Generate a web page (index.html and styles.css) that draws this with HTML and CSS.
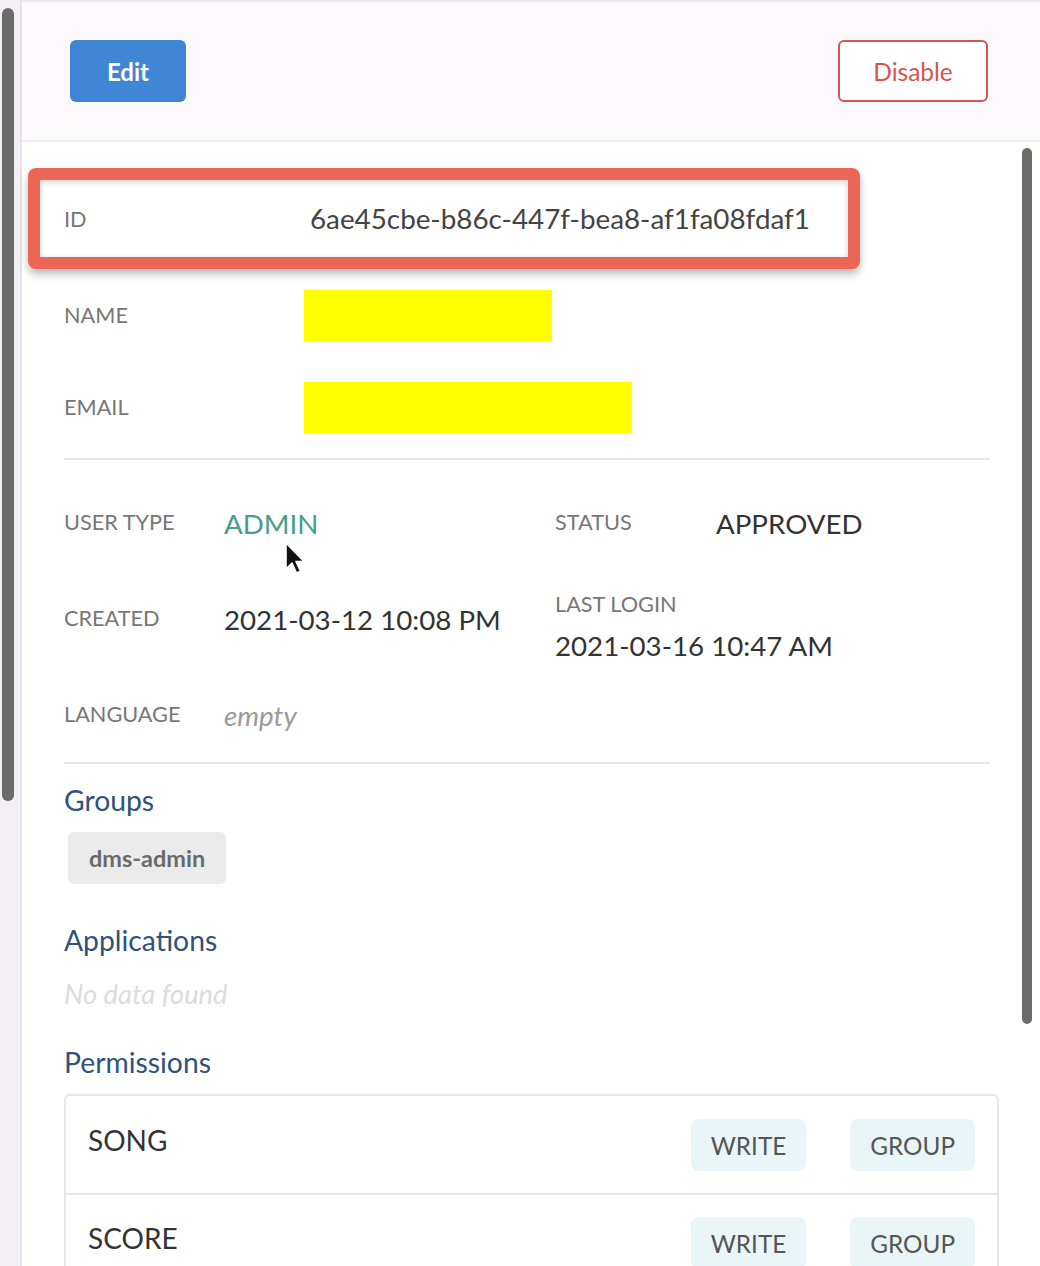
FILE: index.html
```html
<!DOCTYPE html>
<html>
<head>
<meta charset="utf-8">
<link rel="stylesheet" href="styles.css">
</head>
<body>
<div class="app">
  <div class="side-strip"><div class="side-thumb"></div></div>
  <div class="panel">
    <header class="panel-header">
      <button class="btn btn-edit">Edit</button>
      <button class="btn btn-disable">Disable</button>
    </header>
    <div class="panel-body">
      <div class="content">
        <div class="row id-row">
          <div class="label">ID</div>
          <div class="value id-value">6ae45cbe-b86c-447f-bea8-af1fa08fdaf1</div>
        </div>
        <div class="row name-row">
          <div class="label">NAME</div>
          <div class="redact redact-name"></div>
        </div>
        <div class="row email-row">
          <div class="label">EMAIL</div>
          <div class="redact redact-email"></div>
        </div>
        <div class="divider"></div>
        <div class="details">
          <div class="detail-col">
            <div class="drow">
              <div class="dlabel">USER TYPE</div>
              <div class="dvalue admin">ADMIN</div>
            </div>
            <div class="drow">
              <div class="dlabel">CREATED</div>
              <div class="dvalue">2021-03-12 10:08 PM</div>
            </div>
            <div class="drow">
              <div class="dlabel">LANGUAGE</div>
              <div class="dvalue empty">empty</div>
            </div>
          </div>
          <div class="detail-col right-col">
            <div class="drow">
              <div class="dlabel">STATUS</div>
              <div class="dvalue">APPROVED</div>
            </div>
            <div class="stacked">
              <div class="dlabel">LAST LOGIN</div>
              <div class="dvalue">2021-03-16 10:47 AM</div>
            </div>
          </div>
          <svg class="cursor" width="24" height="36" viewBox="0 0 24 36">
            <path d="M2 1 L2 27 L8 21 L12.5 31 L16.5 29.2 L12 19.5 L20 19.5 Z" fill="#111" stroke="#fff" stroke-width="1.6" stroke-linejoin="round"/>
          </svg>
        </div>
        <div class="divider divider-2"></div>
        <h2 class="section-title groups-title">Groups</h2>
        <div class="chips"><span class="chip">dms-admin</span></div>
        <h2 class="section-title apps-title">Applications</h2>
        <div class="no-data">No data found</div>
        <h2 class="section-title perms-title">Permissions</h2>
        <div class="perm-table">
          <div class="perm-row">
            <div class="perm-name">SONG</div>
            <div class="perm-tags"><span class="tag">WRITE</span><span class="tag">GROUP</span></div>
          </div>
          <div class="perm-row">
            <div class="perm-name">SCORE</div>
            <div class="perm-tags"><span class="tag">WRITE</span><span class="tag">GROUP</span></div>
          </div>
        </div>
      </div>
      <div class="vscroll"><div class="vthumb"></div></div>
    </div>
  </div>
</div>
</body>
</html>
```

FILE: styles.css
```css
* { box-sizing: border-box; }
html, body { margin: 0; padding: 0; }
body {
  font-family: Lato, "Noto Sans", "Liberation Sans", sans-serif;
  background: #ffffff;
  color: #333;
  width: 1040px;
  height: 1266px;
  overflow: hidden;
}
.app {
  display: flex;
  height: 1266px;
}
.side-strip {
  flex: none;
  width: 22px;
  background: #f3eff5;
  border-right: 2px solid #e6e2ea;
  padding: 8px 0 0 2px;
}
.side-thumb {
  width: 12px;
  height: 793px;
  background: #6a6a6a;
  border-radius: 6px;
}
.panel {
  flex: 1;
  display: flex;
  flex-direction: column;
  min-width: 0;
}
.panel-header {
  height: 142px;
  flex: none;
  background: #fbf9fc;
  border-top: 2px solid #ebebeb;
  border-bottom: 2px solid #eeeeee;
  display: flex;
  justify-content: space-between;
  align-items: flex-start;
  padding: 38px 52px 0 48px;
}
.btn {
  font-family: Lato, "Noto Sans", sans-serif;
  border-radius: 6px;
  height: 62px;
  cursor: pointer;
  padding: 0;
}
.btn-edit {
  width: 116px;
  background: #3f87d4;
  color: #fff;
  border: none;
  font-size: 24px;
  font-weight: 700;
}
.btn-disable {
  width: 150px;
  background: #fff;
  color: #d9534f;
  border: 2px solid #d9534f;
  font-weight: 400;
  font-size: 24.5px;
}
.panel-body {
  flex: 1;
  display: flex;
  min-height: 0;
}
.content {
  flex: 1;
  padding: 26px 0 0 42px;
  position: relative;
  min-width: 0;
}
.vscroll {
  width: 20px;
  flex: none;
  padding: 6px 0 0 2px;
}
.vthumb {
  width: 10px;
  height: 876px;
  background: #6b6d6b;
  border-radius: 5px;
}
.row {
  display: flex;
  align-items: center;
}
.label {
  width: 240px;
  flex: none;
  font-size: 21.7px;
  color: #777;
}
.value {
  font-size: 27.8px;
  color: #444;
}
.id-row {
  margin-left: -36px;
  width: 832px;
  height: 101px;
  border: 12px solid #ec6656;
  border-radius: 8px;
  padding-left: 24px;
  box-shadow: 0 5px 9px rgba(0,0,0,0.28), inset 0 2px 6px rgba(0,0,0,0.18);
  background: #fff;
}
.id-value { padding-left: 6px; }
.name-row { height: 92px; }
.email-row { height: 92px; }
.redact { background: #ffff00; height: 51px; }
.redact-name { width: 248px; }
.redact-email { width: 328px; }
.divider {
  height: 2px;
  background: #e6e6e6;
  margin-top: 5px;
  width: 926px;
}
.details {
  display: flex;
  position: relative;
  padding-top: 14px;
}
.detail-col { width: 491px; }
.right-col { width: 435px; }
.drow {
  display: flex;
  align-items: center;
  height: 96px;
}
.dlabel {
  width: 160px;
  flex: none;
  font-size: 21.7px;
  color: #777;
  line-height: 26px;
}
.right-col .dlabel { width: 161px; }
.dvalue {
  font-size: 27.7px;
  color: #333;
  line-height: 34px;
}
.drow .dvalue { padding-top: 4px; }
.admin { color: #489d8b; }
.empty { color: #9a9a9a; font-style: italic; }
.stacked {
  margin-top: 21px;
}
.stacked .dlabel { width: auto; }
.stacked .dvalue { margin-top: 12px; }
.cursor {
  position: absolute;
  left: 220px;
  top: 82px;
}
.divider-2 { margin-top: 0; }
.section-title {
  margin: 0;
  font-size: 28.3px;
  line-height: 34px;
  font-weight: 400;
  color: #2f5378;
}
.groups-title { margin-top: 19px; }
.chips { margin-top: 15px; height: 52px; }
.chip {
  display: inline-block;
  margin-left: 4px;
  background: #ebebeb;
  color: #6a6a6a;
  font-weight: 700;
  font-size: 23.5px;
  border-radius: 6px;
  padding: 0 21px;
  height: 52px;
  line-height: 52px;
}
.apps-title { margin-top: 39px; }
.no-data {
  margin-top: 20px;
  color: #dcdcdc;
  font-style: italic;
  font-size: 27.3px;
  line-height: 34px;
}
.perms-title { margin-top: 34px; }
.perm-table {
  margin-top: 15px;
  width: 935px;
  border: 2px solid #e6e6e6;
  border-radius: 6px;
}
.perm-row {
  display: flex;
  align-items: center;
  justify-content: space-between;
  height: 97px;
  padding: 0 22px 0 22px;
}
.perm-row + .perm-row { border-top: 2px solid #e6e6e6; }
.perm-name { font-size: 28px; color: #333; padding-bottom: 9px; }
.perm-tags { display: flex; gap: 44px; }
.tag {
  display: inline-block;
  background: #eaf5f7;
  color: #555;
  font-size: 24.3px;
  border-radius: 8px;
  height: 52px;
  line-height: 54px;
  padding: 0 20px;
}
```
